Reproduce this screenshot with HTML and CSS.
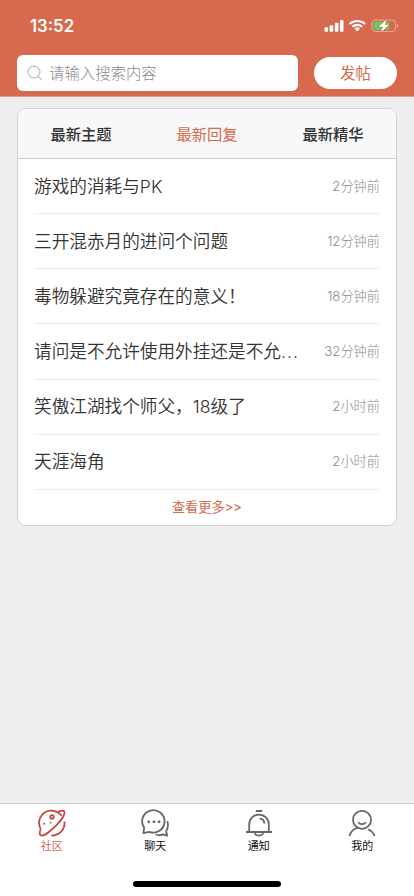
FILE: index.html
```html
<!DOCTYPE html>
<html lang="zh-CN">
<head>
<meta charset="utf-8">
<meta name="viewport" content="width=device-width, initial-scale=1">
<title>社区</title>
<link rel="stylesheet" href="styles.css">
</head>
<body>
<header class="header">
  <div class="status">
    <span class="clock">13:52</span>
    <svg class="status-icons" width="76" height="16" viewBox="0 0 76 16">
      <g fill="#fff">
        <rect x="0.5" y="9.3" width="3.6" height="4.4" rx="1"/>
        <rect x="5.6" y="7.2" width="3.6" height="6.5" rx="1"/>
        <rect x="10.8" y="4.8" width="3.6" height="8.9" rx="1"/>
        <rect x="15.9" y="2" width="3.6" height="11.7" rx="1"/>
        <path d="M31.2 10.5c1.2-1 3-1 4.2 0l-2.1 2.6z" stroke="#fff" stroke-width="1" stroke-linejoin="round"/>
      </g>
      <g fill="none" stroke="#fff" stroke-width="2.1">
        <path d="M25.5 6a11.5 11.5 0 0 1 15.6 0"/>
        <path d="M28.5 8.7a7.1 7.1 0 0 1 9.6 0"/>
      </g>
      <rect x="48" y="2" width="23.5" height="11.6" rx="3.4" fill="none" stroke="#fff" stroke-opacity=".45"/>
      <path d="M73 6v3.8c1.6-.6 1.6-3.2 0-3.8z" fill="#fff" fill-opacity=".5"/>
      <rect x="49.7" y="3.8" width="15.5" height="8.1" rx="1.8" fill="#5fcf66"/>
      <path d="M62.6 1.4L54.6 8.8h4.2L57 14.2l8.1-7.4h-4.2z" fill="#fff" stroke="#d6694e" stroke-width="1.2" paint-order="stroke"/>
    </svg>
  </div>
  <div class="toolbar">
    <div class="search">
      <svg width="16" height="16" viewBox="0 0 16 16" fill="none" stroke="#bcbcbc" stroke-width="1.2">
        <circle cx="7" cy="7" r="5.9"/><path d="M11.2 11.3l3.5 3.5"/>
      </svg>
      <span class="placeholder">请输入搜索内容</span>
    </div>
    <button class="post">发帖</button>
  </div>
</header>
<main class="main">
  <section class="card">
    <nav class="tabs">
      <span class="tab">最新主题</span>
      <span class="tab active">最新回复</span>
      <span class="tab">最新精华</span>
    </nav>
    <ul class="list">
      <li class="row"><span class="title">游戏的消耗与PK</span><time>2分钟前</time></li>
      <li class="row"><span class="title">三开混赤月的进问个问题</span><time>12分钟前</time></li>
      <li class="row"><span class="title">毒物躲避究竟存在的意义！</span><time>18分钟前</time></li>
      <li class="row"><span class="title">请问是不允许使用外挂还是不允<span class="ellipsis">...</span></span><time>32分钟前</time></li>
      <li class="row"><span class="title">笑傲江湖找个师父，18级了</span><time>2小时前</time></li>
      <li class="row"><span class="title">天涯海角</span><time>2小时前</time></li>
    </ul>
    <div class="more">查看更多&gt;&gt;</div>
  </section>
</main>
<footer class="footer">
  <nav class="nav">
    <div class="item current">
      <svg class="icon" viewBox="0 0 30 30">
        <path d="M3.700 20A12.300 12.300 0 0 1 20.500 3.200C23.700 1.500 26.300 1.200 27.200 2.400c1.300 2.200-2 8.100-7.700 13.700C13.600 22.200 6.400 27.700 3.700 26.300 2.200 25.400 2.600 22.800 3.700 20"/>
        <path d="M20.500 3.200c1.900 1 3.200 2.100 4.200 3.600"/>
        <path d="M27.500 12.500c.7 7.800-4.800 13.700-13.200 14.100"/>
        <circle cx="15" cy="7.900" r="1.700"/>
        <circle class="dot" cx="7.200" cy="14.700" r="1"/><circle class="dot" cx="13.600" cy="13.700" r=".9"/>
      </svg>
      <span>社区</span>
    </div>
    <div class="item">
      <svg class="icon" viewBox="0 0 30 30">
        <path d="M3.400 24.200l.8-5.400a11.200 11.200 0 1 1 5.100 4z"/>
        <path d="M27.300 12.300c1.200 3.600.6 7.200-1.200 9.900l1.100 4.500-4-1.300c-2.700 1-5.300 1.100-7.700.1"/>
        <circle class="dot" cx="8.700" cy="12.800" r="1.400"/><circle class="dot" cx="13.900" cy="12.800" r="1.400"/><circle class="dot" cx="19.100" cy="12.800" r="1.400"/>
      </svg>
      <span>聊天</span>
    </div>
    <div class="item">
      <svg class="icon" viewBox="0 0 30 30">
        <path d="M11.800 2h6.400M5.200 22.700v-7.300a9.800 9.800 0 0 1 19.600 0v7.300M2 23h26M10.800 23.500c.4 4 8 4 8.400 0M15.600 9.600c2.900.1 4.700 2 4.700 5"/>
      </svg>
      <span>通知</span>
    </div>
    <div class="item">
      <svg class="icon" viewBox="0 0 30 30">
        <circle cx="15" cy="10.800" r="9"/>
        <path d="M11.200 13.300c2 2.600 5.600 2.600 7.600 0M2.300 27c1.600-4.400 4.700-7.400 8.700-8.100M21.300 20.200c2.800 1.400 5 3.500 6.400 6.800"/>
      </svg>
      <span>我的</span>
    </div>
  </nav>
  <div class="home"></div>
</footer>
</body>
</html>
```
FILE: styles.css
```css
* { box-sizing: border-box; }
body {
  margin: 0;
  height: 896px;
  display: flex;
  flex-direction: column;
  background: #eee;
  color: #333;
  font-family: Inter, "Noto Sans CJK SC", sans-serif;
  overflow: hidden;
}
.header {
  height: 97px;
  background: #d6694e;
  border-bottom: 1px solid #dc9d8e;
}
.status {
  height: 55px;
  padding: 0 14px 4px 30px;
  display: flex;
  align-items: center;
  justify-content: space-between;
}
.clock { color: #fff; font-size: 16.8px; font-weight: 600; }
.toolbar {
  display: flex;
  align-items: center;
  justify-content: space-between;
  padding: 0 17px;
}
.search {
  width: 281px;
  height: 36px;
  padding-left: 10px;
  display: flex;
  align-items: center;
  gap: 6px;
  border-radius: 6px;
  background: #fff;
  color: #8c8c8c;
  font-size: 15.4px;
  font-weight: 300;
}
.placeholder { padding-bottom: 2px; }
.post {
  width: 83px;
  height: 32px;
  padding: 0 0 2px;
  border: 0;
  border-radius: 16px;
  background: #fff;
  color: #d6694e;
  font: inherit;
  font-size: 15.4px;
}
.main { flex: 1; padding: 11px 17px; }
.card {
  height: 418px;
  border: 1px solid #d0d0d0;
  border-radius: 9px;
  background: #fff;
  overflow: hidden;
}
.tabs {
  height: 50px;
  padding-bottom: 2px;
  display: grid;
  grid-template-columns: repeat(3, 1fr);
  align-items: center;
  text-align: center;
  background: #f8f8f8;
  border-bottom: 1px solid #ccc;
  font-size: 15.3px;
  font-weight: 500;
}
.active { color: #d6694e; font-weight: 400; }
.list { list-style: none; margin: 0; padding: 0 16px; }
.row {
  height: 55.17px;
  padding-bottom: 2px;
  display: flex;
  align-items: center;
  justify-content: space-between;
  border-bottom: 1px solid #ececec;
  font-size: 17.65px;
}
.title { white-space: nowrap; font-weight: 350; }
.ellipsis { letter-spacing: 1px; }
time { color: #8c8c8c; font-size: 13.2px; font-weight: 300; }
.more {
  height: 35px;
  line-height: 35px;
  text-align: center;
  color: #d6694e;
  font-size: 13.2px;
}
.footer {
  height: 93px;
  border-top: 1px solid #ccc;
  background: #fff;
}
.nav { display: grid; grid-template-columns: repeat(4, 1fr); height: 77px; }
.item {
  display: flex;
  flex-direction: column;
  align-items: center;
  padding-top: 5px;
  color: #111;
  font-size: 11px;
  line-height: 14px;
}
.current { color: #d6694e; }
.icon {
  width: 30px;
  height: 30px;
  fill: none;
  stroke: #666;
  stroke-width: 1.8;
  stroke-linejoin: round;
}
.current .icon { stroke: #c5473f; }
.icon .dot { fill: #666; stroke: none; }
.current .icon .dot { fill: #c5473f; }
.home { width: 148px; height: 6px; margin: 0 auto; border-radius: 3px; background: #000; }
```
